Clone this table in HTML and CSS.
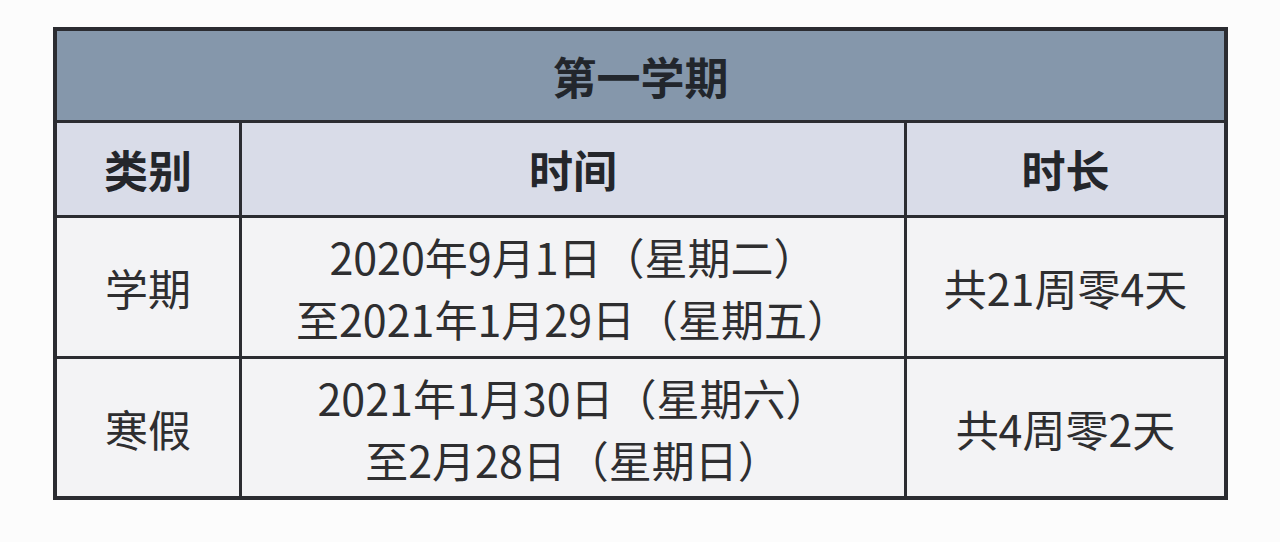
FILE: index.html
```html
<!DOCTYPE html>
<html lang="zh-CN">
<head>
<meta charset="utf-8">
<title>第一学期</title>
<link rel="stylesheet" href="styles.css">
</head>
<body>
<div class="sheet">
  <div class="cell title">第一学期</div>
  <div class="cell head">类别</div>
  <div class="cell head">时间</div>
  <div class="cell head">时长</div>
  <div class="cell body">学期</div>
  <div class="cell body"><span>2020年9月1日（星期二）</span><span>至2021年1月29日（星期五）</span></div>
  <div class="cell body">共21周零4天</div>
  <div class="cell body">寒假</div>
  <div class="cell body"><span>2021年1月30日（星期六）</span><span>至2月28日（星期日）</span></div>
  <div class="cell body">共4周零2天</div>
</div>
</body>
</html>
```

FILE: styles.css
```css
html, body {
  margin: 0;
  padding: 0;
  background: #fcfcfc;
}
body {
  padding: 27px 0 0 53px;
  font-family: "Noto Sans CJK SC", "Noto Sans", sans-serif;
  color: #2a2a2c;
}
.sheet {
  display: grid;
  grid-template-columns: 182px 662px 317px;
  grid-template-rows: 89px 92px 138px 137px;
  gap: 3px;
  padding: 4px;
  width: max-content;
  background: #2b2c31;
}
.cell {
  display: flex;
  flex-direction: column;
  align-items: center;
  justify-content: center;
  font-size: 43px;
  line-height: 62px;
  white-space: nowrap;
}
.title {
  grid-column: 1 / 4;
  background: #8597ab;
  font-size: 44px;
  font-weight: 700;
  color: #22262c;
}
.head {
  background: #d9dce8;
  font-size: 44px;
  font-weight: 700;
  color: #24262b;
}
.body {
  background: #f3f3f5;
  font-weight: 400;
  color: #2e2e30;
}
```
